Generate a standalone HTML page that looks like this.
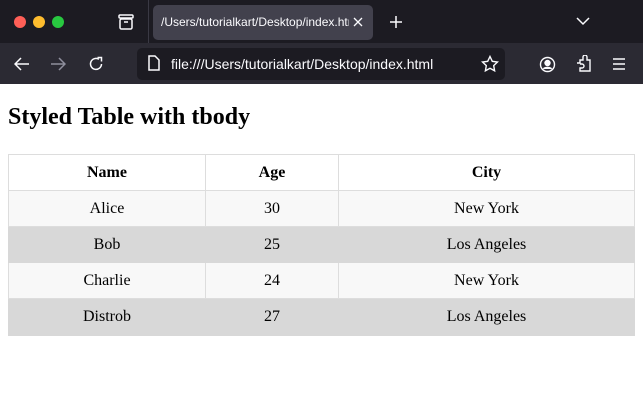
<!DOCTYPE html>
<html><head><meta charset="utf-8"><style>
*{margin:0;padding:0;box-sizing:border-box}
body{width:643px;height:407px;overflow:hidden;background:#fff;font-family:"Liberation Serif",serif;position:relative}
.tabbar{position:absolute;left:0;top:0;width:643px;height:43px;background:#1c1b22}
.toolbar{position:absolute;left:0;top:43px;width:643px;height:41px;background:#2b2a33}
.dot{position:absolute;top:16px;width:12px;height:12px;border-radius:50%}
.tab{position:absolute;left:153px;top:5px;width:220px;height:35px;background:#42414d;border-radius:5px;color:#fbfbfe;font:12px "Liberation Sans",sans-serif;line-height:35px;padding-left:8px;white-space:nowrap;overflow:hidden}
.tab span{display:block;width:188px;overflow:hidden}
.url{position:absolute;left:137px;top:5px;width:368px;height:32px;background:#1c1b22;border-radius:5px;color:#fbfbfe;font:14px "Liberation Sans",sans-serif;line-height:32px;padding-left:34px}
svg{position:absolute}
h2{position:absolute;left:8px;top:102px;font-size:24px;font-weight:bold;line-height:30px}
table{position:absolute;left:8px;top:154px;width:627px;border-collapse:collapse;font-size:16px}
td,th{border:1px solid #ddd;text-align:center;height:36px;padding:0}
th{background:#fff}
tr.a td{background:#f8f8f8}
tr.b td{background:#d8d8d8;border-color:#d8d8d8}
tr.last td{height:37px}
</style></head><body>
<div class="tabbar">
<div class="dot" style="left:14px;background:#ff5f57"></div>
<div class="dot" style="left:33px;background:#febc2e"></div>
<div class="dot" style="left:52px;background:#28c840"></div>
<svg style="left:117px;top:13px" width="18" height="18" viewBox="0 0 18 18" fill="none" stroke="#fbfbfe" stroke-width="1.5"><rect x="2" y="2" width="14" height="3" rx="1"/><rect x="3" y="6" width="12" height="10" rx="1.5"/><path d="M7 9h4"/></svg>
<div style="position:absolute;left:148px;top:0;width:1px;height:43px;background:#3a3944"></div>
<div class="tab"><span>/Users/tutorialkart/Desktop/index.html</span></div>
<svg style="left:353px;top:17px" width="10" height="10" viewBox="0 0 10 10" stroke="#fbfbfe" stroke-width="1.3"><path d="M1 1l8 8M9 1l-8 8"/></svg>
<svg style="left:389px;top:15px" width="14" height="14" viewBox="0 0 14 14" stroke="#fbfbfe" stroke-width="1.5"><path d="M7 1v12M1 7h12"/></svg>
<svg style="left:576px;top:17px" width="14" height="9" viewBox="0 0 14 9" fill="none" stroke="#fbfbfe" stroke-width="1.5"><path d="M1 1l6 6 6-6"/></svg>
</div>
<div class="toolbar">
<svg style="left:14px;top:14px" width="16" height="14" viewBox="0 0 16 14" fill="none" stroke="#fbfbfe" stroke-width="1.5"><path d="M15 7H2M7 1L1 7l6 6"/></svg>
<svg style="left:50px;top:14px" width="16" height="14" viewBox="0 0 16 14" fill="none" stroke="#8f8f9d" stroke-width="1.5"><path d="M1 7h13M9 1l6 6-6 6"/></svg>
<svg style="left:87px;top:12px" width="18" height="18" viewBox="0 0 18 18" fill="none" stroke="#fbfbfe" stroke-width="1.5"><path d="M14.5 9A5.5 5.5 0 1 1 12 4.3"/><path d="M10.5 2.5h4v4"/></svg>
<div class="url">file:///Users/tutorialkart/Desktop/index.html</div>
<svg style="left:147px;top:12px" width="14" height="17" viewBox="0 0 14 17" fill="none" stroke="#fbfbfe" stroke-width="1.5"><path d="M2 1h6l4 4v10H2z"/></svg>
<svg style="left:481px;top:12px" width="18" height="18" viewBox="0 0 18 18" fill="none" stroke="#fbfbfe" stroke-width="1.4"><path d="M9 1.5l2.3 4.8 5.2.7-3.8 3.6.9 5.2L9 13.3l-4.6 2.5.9-5.2L1.5 7l5.2-.7z"/></svg>
<svg style="left:539px;top:13px" width="17" height="17" viewBox="0 0 17 17" fill="none" stroke="#fbfbfe" stroke-width="1.4"><circle cx="8.5" cy="8.5" r="7"/><circle cx="8.5" cy="7" r="2.5" fill="#fbfbfe"/><path d="M4.5 13c1-2 7-2 8 0" fill="#fbfbfe"/></svg>
<svg style="left:576px;top:12px" width="16" height="18" viewBox="0 0 16 18" fill="none" stroke="#fbfbfe" stroke-width="1.4"><path d="M1 8h3V5h3V2a2 2 0 0 1 4 0v3h3v11H4v-3h2a2 2 0 0 0 0-4H4"/></svg>
<svg style="left:612px;top:15px" width="14" height="12" viewBox="0 0 14 12" stroke="#fbfbfe" stroke-width="1.4"><path d="M1 1h12M1 6h12M1 11h12"/></svg>
</div>
<h2>Styled Table with tbody</h2>
<table>
<colgroup><col style="width:197px"><col style="width:133px"><col></colgroup>
<thead><tr><th>Name</th><th>Age</th><th>City</th></tr></thead>
<tbody>
<tr class="a"><td>Alice</td><td>30</td><td>New York</td></tr>
<tr class="b"><td>Bob</td><td>25</td><td>Los Angeles</td></tr>
<tr class="a"><td>Charlie</td><td>24</td><td>New York</td></tr>
<tr class="b last"><td>Distrob</td><td>27</td><td>Los Angeles</td></tr>
</tbody></table>
</body></html>
